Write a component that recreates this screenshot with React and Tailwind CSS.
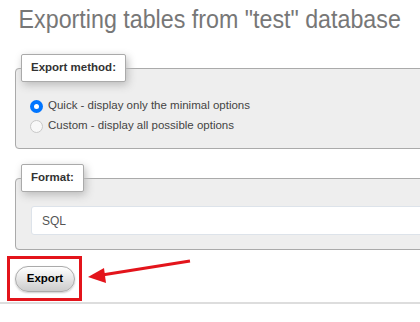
import React from "react";

const Radio = ({ checked, label }) => (
  <label className="flex items-center h-5 text-[11.5px] text-[#444]">
    {checked ? (
      <span className="w-[13px] h-[13px] rounded-full bg-[#0075ff] flex items-center justify-center ml-[14px]">
        <span className="w-[5px] h-[5px] rounded-full bg-white" />
      </span>
    ) : (
      <span className="w-[13px] h-[13px] rounded-full border border-[#c8c8c8] bg-[#f8f8f8] ml-[14px]" />
    )}
    <span className="ml-[5px]">{label}</span>
  </label>
);

const Legend = ({ children }) => (
  <legend className="ml-[5px] px-[9px] h-[28px] flex items-center bg-white border border-[#aaa] rounded-[2px] shadow-[2px_3px_8px_#bbb] text-[11.5px] font-bold text-[#333]">
    {children}
  </legend>
);

export default function App() {
  return (
    <div
      className="w-[420px] h-[322px] overflow-hidden bg-white"
      style={{ fontFamily: '"Liberation Sans", Arial, sans-serif' }}
    >
      <div className="w-[460px]">
        <h2 className="pl-[20px] pt-[3px] text-[25px] leading-[32px] text-[#777] font-normal whitespace-nowrap origin-left scale-x-[0.93]">
          Exporting tables from "test" database
        </h2>

        <fieldset className="mt-[19px] ml-[15px] border border-[#aaa] rounded-[4px] bg-[#eee]">
          <Legend>Export method:</Legend>
          <div className="pt-[14px] pb-[12px]">
            <Radio checked label="Quick - display only the minimal options" />
            <Radio label="Custom - display all possible options" />
          </div>
        </fieldset>

        <fieldset className="mt-[15px] ml-[15px] border border-[#aaa] rounded-[4px] bg-[#eee]">
          <Legend>Format:</Legend>
          <div className="pt-[14px] pb-[14px] pl-[15px]">
            <div className="h-[29px] bg-white border border-[#dde3ea] rounded-[3px] flex items-center pl-[10px] text-[12px] text-[#555]">
              SQL
            </div>
          </div>
        </fieldset>

        <div className="flex items-start mt-[6px]">
          <div className="ml-[7px] border-[3px] border-[#e3141b] pt-[6px] pb-[6px] pl-[5px] pr-[4px]">
            <button className="h-[26px] w-[60px] rounded-full border border-[#aaa] bg-gradient-to-b from-white to-[#ccc] text-[11.5px] font-bold text-black shadow-[0_1px_2px_#ccc]">
              Export
            </button>
          </div>
          <svg width="110" height="30" viewBox="0 0 110 30" className="ml-[4px] mt-[3px]">
            <line x1="104" y1="2" x2="16" y2="16" stroke="#e3141b" strokeWidth="3" />
            <polygon points="2,18 18,9 20,24" fill="#e3141b" />
          </svg>
        </div>

        <div className="mt-[1px] h-[2px] bg-[#ddd]" />
      </div>
    </div>
  );
}
